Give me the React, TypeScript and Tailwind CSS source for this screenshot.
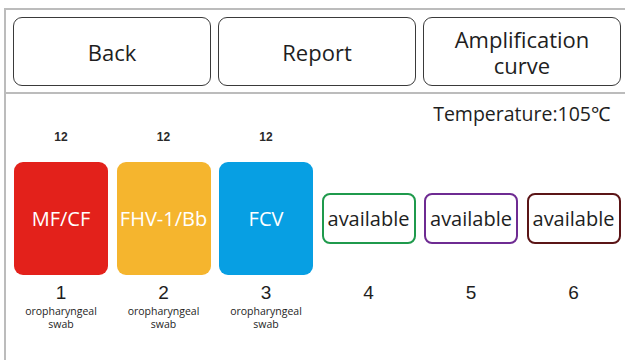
import React from 'react';

interface Slot {
  id: number;
  count?: string;
  label?: string;
  color?: string;
  outline?: string;
  sample?: boolean;
}

const slots: Slot[] = [
  { id: 1, count: '12', label: 'MF/CF', color: 'bg-[#e3211b]', sample: true },
  { id: 2, count: '12', label: 'FHV-1/Bb', color: 'bg-[#f5b52e]', sample: true },
  { id: 3, count: '12', label: 'FCV', color: 'bg-[#079fe3]', sample: true },
  { id: 4, outline: 'border-[#1f9a4c]' },
  { id: 5, outline: 'border-[#6e2b92]' },
  { id: 6, outline: 'border-[#5b1517]' },
];

const buttons = ['Back', 'Report', 'Amplification curve'];

export default function App() {
  return (
    <div className="w-[625px] h-[360px] bg-white overflow-hidden font-['Open_Sans',sans-serif] text-[#1e1e1e]">
      <div className="mt-[8px] ml-[4px] h-[352px] border-l-2 border-t-2 border-[#bcbcbc]">
        <div className="flex gap-[7px] pl-[7px] pt-[7px] pb-[6px] border-b-2 border-[#bcbcbc]">
          {buttons.map((b) => (
            <button
              key={b}
              className="w-[198px] h-[69px] rounded-[9px] border-[1.5px] border-[#3a3a3a] bg-white flex items-center justify-center px-6 text-[22px] leading-[26px] text-center"
            >
              {b === 'Amplification curve' ? (
                <span>
                  Amplification
                  <br />
                  curve
                </span>
              ) : (
                b
              )}
            </button>
          ))}
        </div>

        <div className="mt-[8px] pr-[15px] text-right text-[19.5px] leading-[24px]">Temperature:105℃</div>

        <div className="grid grid-cols-[repeat(6,94px)] gap-x-[8.5px] pl-[8px]">
          {slots.map((s) => (
            <div key={s.id} className="flex flex-col items-center">
              <div className="h-[22px] flex items-center text-[12px] font-semibold font-['Liberation_Sans',sans-serif] text-[#2a2a2a]">
                {s.count ?? ''}
              </div>
              <div className="mt-[14px] h-[113px] w-full flex items-center justify-center">
                {s.color ? (
                  <div className={`w-full h-full rounded-[9px] ${s.color} flex items-center justify-center text-white text-[20px] whitespace-nowrap`}>
                    {s.label}
                  </div>
                ) : (
                  <div className={`w-full h-[51px] rounded-[8px] border-[2.5px] ${s.outline} flex items-center justify-center text-[20px]`}>
                    available
                  </div>
                )}
              </div>
              <div className="mt-[8px] text-[19px] leading-[20px] font-['Liberation_Sans',sans-serif]">{s.id}</div>
              {s.sample && (
                <div className="mt-[2px] flex flex-col items-center text-[10.5px]">
                  <div className="leading-[13px]">oropharyngeal</div>
                  <div className="leading-[13px]">swab</div>
                </div>
              )}
            </div>
          ))}
        </div>
      </div>
    </div>
  );
}
